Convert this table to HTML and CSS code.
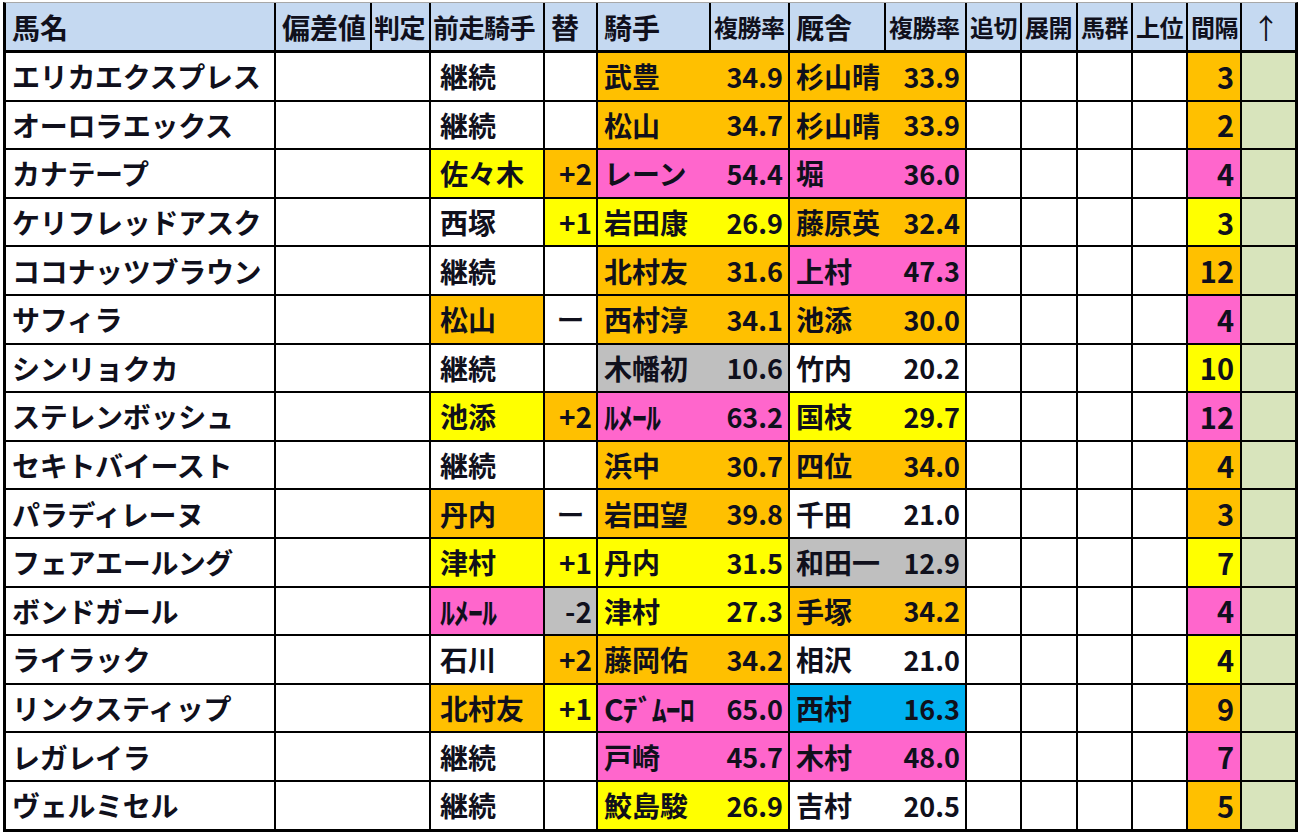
FILE: index.html
```html
<!DOCTYPE html>
<html lang="ja">
<head>
<meta charset="utf-8">
<title>出走表</title>
<link rel="stylesheet" href="styles.css">
</head>
<body>
<div class="sheet">
  <div class="row head">
    <div class="c">馬名</div>
    <div class="c">偏差値</div>
    <div class="c s1">判定</div>
    <div class="c s1">前走騎手</div>
    <div class="c">替</div>
    <div class="c">騎手</div>
    <div class="c s2">複勝率</div>
    <div class="c">厩舎</div>
    <div class="c s2">複勝率</div>
    <div class="c s2">追切</div>
    <div class="c s2">展開</div>
    <div class="c s2">馬群</div>
    <div class="c s2">上位</div>
    <div class="c s2">間隔</div>
    <div class="c arrow">↑</div>
  </div>

  <div class="row"><div class="c nm">エリカエクスプレス</div><div class="c sp"></div><div class="c pv">継続</div><div class="c kae"></div><div class="c pair o"><span>武豊</span><span class="num">34.9</span></div><div class="c pair o"><span>杉山晴</span><span class="num">33.9</span></div><div class="c"></div><div class="c"></div><div class="c"></div><div class="c"></div><div class="c iv o">3</div><div class="c gr"></div></div>

  <div class="row"><div class="c nm">オーロラエックス</div><div class="c sp"></div><div class="c pv">継続</div><div class="c kae"></div><div class="c pair o"><span>松山</span><span class="num">34.7</span></div><div class="c pair o"><span>杉山晴</span><span class="num">33.9</span></div><div class="c"></div><div class="c"></div><div class="c"></div><div class="c"></div><div class="c iv o">2</div><div class="c gr"></div></div>

  <div class="row"><div class="c nm">カナテープ</div><div class="c sp"></div><div class="c pv y">佐々木</div><div class="c kae o">+2</div><div class="c pair p"><span>レーン</span><span class="num">54.4</span></div><div class="c pair p"><span>堀</span><span class="num">36.0</span></div><div class="c"></div><div class="c"></div><div class="c"></div><div class="c"></div><div class="c iv p">4</div><div class="c gr"></div></div>

  <div class="row"><div class="c nm">ケリフレッドアスク</div><div class="c sp"></div><div class="c pv">西塚</div><div class="c kae y">+1</div><div class="c pair y"><span>岩田康</span><span class="num">26.9</span></div><div class="c pair o"><span>藤原英</span><span class="num">32.4</span></div><div class="c"></div><div class="c"></div><div class="c"></div><div class="c"></div><div class="c iv y">3</div><div class="c gr"></div></div>

  <div class="row"><div class="c nm">ココナッツブラウン</div><div class="c sp"></div><div class="c pv">継続</div><div class="c kae"></div><div class="c pair o"><span>北村友</span><span class="num">31.6</span></div><div class="c pair p"><span>上村</span><span class="num">47.3</span></div><div class="c"></div><div class="c"></div><div class="c"></div><div class="c"></div><div class="c iv o">12</div><div class="c gr"></div></div>

  <div class="row"><div class="c nm">サフィラ</div><div class="c sp"></div><div class="c pv o">松山</div><div class="c kae dash">ー</div><div class="c pair o"><span>西村淳</span><span class="num">34.1</span></div><div class="c pair o"><span>池添</span><span class="num">30.0</span></div><div class="c"></div><div class="c"></div><div class="c"></div><div class="c"></div><div class="c iv p">4</div><div class="c gr"></div></div>

  <div class="row"><div class="c nm">シンリョクカ</div><div class="c sp"></div><div class="c pv">継続</div><div class="c kae"></div><div class="c pair g"><span>木幡初</span><span class="num">10.6</span></div><div class="c pair"><span>竹内</span><span class="num">20.2</span></div><div class="c"></div><div class="c"></div><div class="c"></div><div class="c"></div><div class="c iv y">10</div><div class="c gr"></div></div>

  <div class="row"><div class="c nm">ステレンボッシュ</div><div class="c sp"></div><div class="c pv y">池添</div><div class="c kae o">+2</div><div class="c pair p"><span class="hw">ﾙﾒｰﾙ</span><span class="num">63.2</span></div><div class="c pair y"><span>国枝</span><span class="num">29.7</span></div><div class="c"></div><div class="c"></div><div class="c"></div><div class="c"></div><div class="c iv p">12</div><div class="c gr"></div></div>

  <div class="row"><div class="c nm">セキトバイースト</div><div class="c sp"></div><div class="c pv">継続</div><div class="c kae"></div><div class="c pair o"><span>浜中</span><span class="num">30.7</span></div><div class="c pair o"><span>四位</span><span class="num">34.0</span></div><div class="c"></div><div class="c"></div><div class="c"></div><div class="c"></div><div class="c iv o">4</div><div class="c gr"></div></div>

  <div class="row"><div class="c nm">パラディレーヌ</div><div class="c sp"></div><div class="c pv o">丹内</div><div class="c kae dash">ー</div><div class="c pair o"><span>岩田望</span><span class="num">39.8</span></div><div class="c pair"><span>千田</span><span class="num">21.0</span></div><div class="c"></div><div class="c"></div><div class="c"></div><div class="c"></div><div class="c iv o">3</div><div class="c gr"></div></div>

  <div class="row"><div class="c nm">フェアエールング</div><div class="c sp"></div><div class="c pv y">津村</div><div class="c kae y">+1</div><div class="c pair y"><span>丹内</span><span class="num">31.5</span></div><div class="c pair g"><span>和田一</span><span class="num">12.9</span></div><div class="c"></div><div class="c"></div><div class="c"></div><div class="c"></div><div class="c iv y">7</div><div class="c gr"></div></div>

  <div class="row"><div class="c nm">ボンドガール</div><div class="c sp"></div><div class="c pv p"><span class="hw">ﾙﾒｰﾙ</span></div><div class="c kae g">-2</div><div class="c pair y"><span>津村</span><span class="num">27.3</span></div><div class="c pair o"><span>手塚</span><span class="num">34.2</span></div><div class="c"></div><div class="c"></div><div class="c"></div><div class="c"></div><div class="c iv p">4</div><div class="c gr"></div></div>

  <div class="row"><div class="c nm">ライラック</div><div class="c sp"></div><div class="c pv">石川</div><div class="c kae o">+2</div><div class="c pair o"><span>藤岡佑</span><span class="num">34.2</span></div><div class="c pair"><span>相沢</span><span class="num">21.0</span></div><div class="c"></div><div class="c"></div><div class="c"></div><div class="c"></div><div class="c iv y">4</div><div class="c gr"></div></div>

  <div class="row"><div class="c nm">リンクスティップ</div><div class="c sp"></div><div class="c pv o">北村友</div><div class="c kae y">+1</div><div class="c pair p"><span class="hw">Cﾃﾞﾑｰﾛ</span><span class="num">65.0</span></div><div class="c pair b"><span>西村</span><span class="num">16.3</span></div><div class="c"></div><div class="c"></div><div class="c"></div><div class="c"></div><div class="c iv o">9</div><div class="c gr"></div></div>

  <div class="row"><div class="c nm">レガレイラ</div><div class="c sp"></div><div class="c pv">継続</div><div class="c kae"></div><div class="c pair p"><span>戸崎</span><span class="num">45.7</span></div><div class="c pair p"><span>木村</span><span class="num">48.0</span></div><div class="c"></div><div class="c"></div><div class="c"></div><div class="c"></div><div class="c iv p">7</div><div class="c gr"></div></div>

  <div class="row"><div class="c nm">ヴェルミセル</div><div class="c sp"></div><div class="c pv">継続</div><div class="c kae"></div><div class="c pair y"><span>鮫島駿</span><span class="num">26.9</span></div><div class="c pair"><span>吉村</span><span class="num">20.5</span></div><div class="c"></div><div class="c"></div><div class="c"></div><div class="c"></div><div class="c iv o">5</div><div class="c gr"></div></div>
</div>
</body>
</html>
```

FILE: styles.css
```css
html, body {
  margin: 0;
  padding: 0;
  background: #ffffff;
}

body {
  font-family: "Noto Sans CJK JP", "Noto Sans", sans-serif;
  color: #10101c;
  font-size: 28px;
  font-weight: 700;
}

.sheet {
  margin: 2px 0 0 3px;
  width: 1289px;
  background: #000;
  border-left: 3px solid #000;
  border-right: 3px solid #000;
  border-bottom: 3px solid #000;
  border-top: 1px solid #a8a8a8;
  display: flex;
  flex-direction: column;
  gap: 2px;
}

.row {
  display: grid;
  grid-template-columns: 268px 94px 57px 112px 51px 111px 77px 94px 79px 53px 54px 53px 53px 52px 53px;
  column-gap: 2px;
  height: 46.6px;
}

.row.head {
  height: 47px;
  margin-bottom: 1px;
}

.c {
  background: #fff;
  display: flex;
  align-items: center;
  padding: 0 6px;
  white-space: nowrap;
  overflow: hidden;
  line-height: 1;
  box-sizing: border-box;
}

.nm {
  letter-spacing: -0.3px;
}

.head .c {
  background: #c5d9f1;
  padding-left: 6px;
}

.head .s1 {
  font-size: 26px;
  padding-left: 2px;
  letter-spacing: -0.5px;
}

.head .s2 {
  font-size: 24px;
  padding-left: 3px;
  letter-spacing: -0.5px;
}

.head .arrow {
  padding-left: 10px;
  font-size: 28px;
  font-weight: 400;
}

.sp {
  grid-column: span 2;
}

.pv {
  padding-left: 9px;
}

.kae {
  justify-content: flex-end;
  padding-right: 4px;
}

.kae.dash {
  justify-content: center;
  padding: 0;
  font-weight: 500;
}

.pair {
  grid-column: span 2;
  justify-content: space-between;
  padding: 0 5px 0 6px;
}

.num {
  font-size: 27px;
}

.iv {
  justify-content: flex-end;
  font-size: 29px;
  padding-right: 6px;
}

.hw {
  font-size: 30px;
  letter-spacing: -1px;
}

.o { background: #ffc000; }
.y { background: #ffff00; }
.p { background: #ff66cc; }
.g { background: #bfbfbf; }
.b { background: #00b0f0; }
.gr { background: #d8e4bc; }
```
